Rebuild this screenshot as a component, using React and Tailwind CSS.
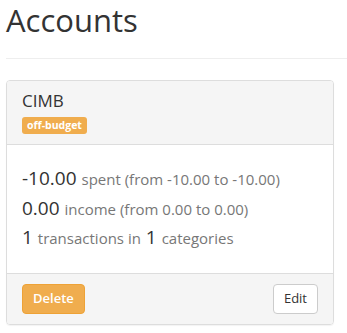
const Small = ({ children }) => (
  <span className="text-[15px] leading-none text-[#777]">{children}</span>
);

export default function App() {
  return (
    <div className="min-h-screen bg-white pl-[6px] font-['Open_Sans',sans-serif] text-[#333]">
      {/* Page header */}
      <h1 className="mt-[3px] text-[31px] leading-[35px] font-normal text-[#333]">
        Accounts
      </h1>
      <hr className="mt-[20px] border-t border-[#eee]" />

      {/* Account panel */}
      <div className="mt-[21px] w-[328px] rounded-[4px] border border-[#ddd] shadow-[0_1px_1px_rgba(0,0,0,0.05)]">
        <div className="rounded-t-[3px] border-b border-[#ddd] bg-[#f5f5f5] px-[15px] pt-[10px] pb-[9px]">
          <h3 className="text-[17px] leading-[20px] text-[#333]">CIMB</h3>
          <span className="mt-[4px] inline-block rounded-[3px] bg-[#f0ad4e] px-[5px] text-[10.5px] leading-[17px] font-bold text-white">
            off-budget
          </span>
        </div>

        <div className="bg-white px-[15px] pt-[19px] pb-[20px] text-[19px] leading-[29.5px] whitespace-nowrap text-[#333]">
          <div>
            -10.00 <Small>spent (from -10.00 to -10.00)</Small>
          </div>
          <div>
            0.00 <Small>income (from 0.00 to 0.00)</Small>
          </div>
          <div>
            1 <Small>transactions in</Small> 1 <Small>categories</Small>
          </div>
        </div>

        <div className="flex items-center justify-between rounded-b-[3px] border-t border-[#ddd] bg-[#f5f5f5] px-[15px] py-[10px]">
          <button className="h-[30px] rounded-[4px] border border-[#eea236] bg-[#f0ad4e] px-[10px] text-[13px] font-semibold text-white">
            Delete
          </button>
          <button className="h-[30px] rounded-[4px] border border-[#ccc] bg-white px-[10px] text-[13px] text-[#333]">
            Edit
          </button>
        </div>
      </div>
    </div>
  );
}
